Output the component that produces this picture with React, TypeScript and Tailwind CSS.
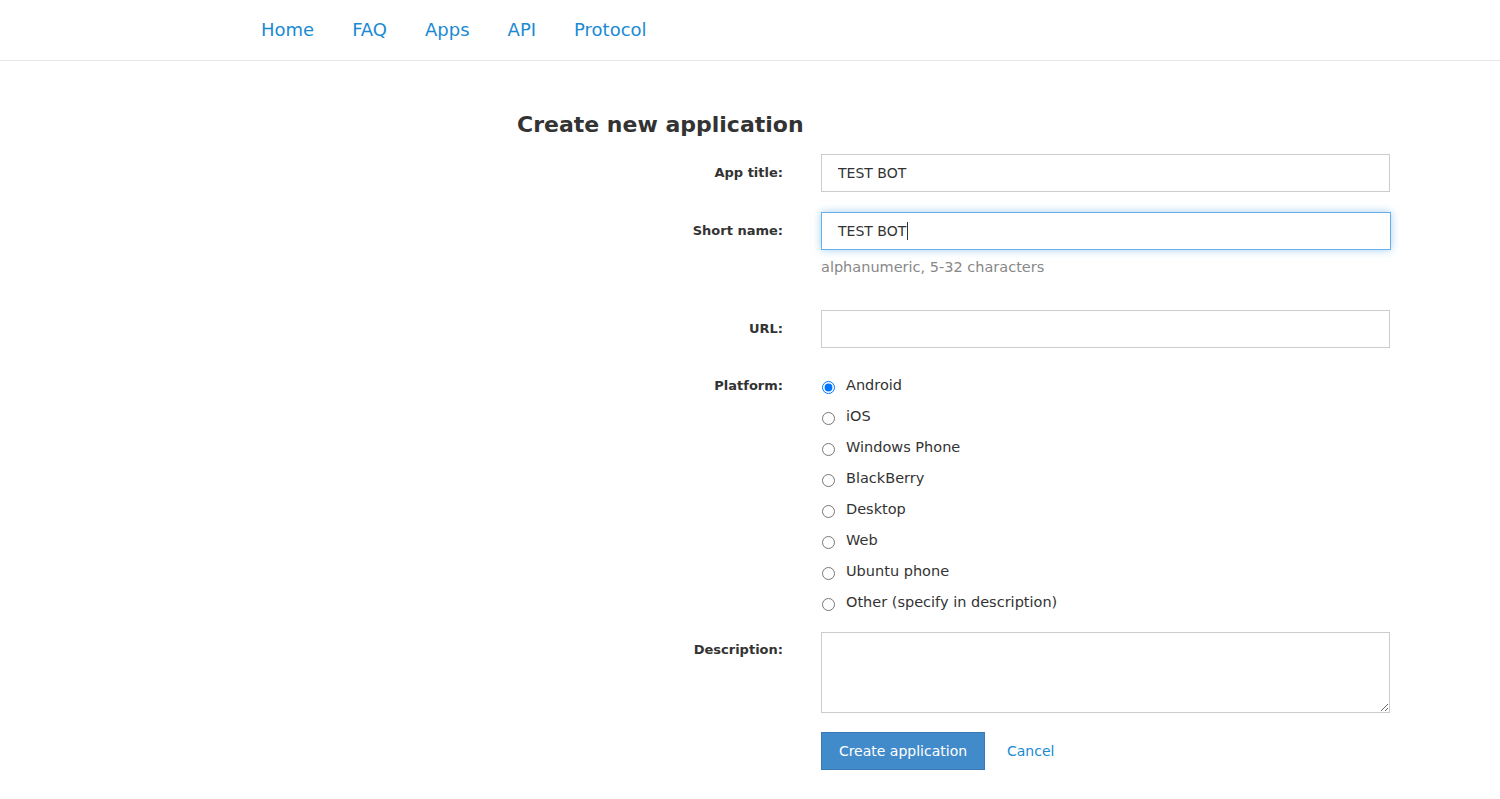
import React from 'react';

const navLinks = ['Home', 'FAQ', 'Apps', 'API', 'Protocol'];

const platforms = [
  'Android',
  'iOS',
  'Windows Phone',
  'BlackBerry',
  'Desktop',
  'Web',
  'Ubuntu phone',
  'Other (specify in description)',
];

function Label({ children, className = '' }: { children: React.ReactNode; className?: string }) {
  return (
    <div className={`w-[266px] shrink-0 text-right text-[13px] font-bold text-[#333] ${className}`}>
      {children}:
    </div>
  );
}

export default function App() {
  return (
    <div className="min-h-[799px] bg-white text-[#333]" style={{ fontFamily: '"DejaVu Sans", Verdana, sans-serif' }}>
      <header className="h-[61px] border-b border-[#e7e7e7]">
        <nav className="flex h-[60px] items-center gap-[38px] pl-[261px] text-[18px] text-[#1a8ad2]">
          {navLinks.map((link) => (
            <a key={link} href="#" className="leading-[24px] hover:underline">
              {link}
            </a>
          ))}
        </nav>
      </header>

      <main className="ml-[517px] w-[873px]">
        <h1 className="mt-[49px] text-[22px] font-bold leading-[30px] text-[#333]">Create new application</h1>

        <div className="mt-[14px] flex gap-[38px]">
          <Label className="leading-[38px]">App title</Label>
          <input
            defaultValue="TEST BOT"
            className="h-[38px] w-[570px] border border-[#ccc] px-[16px] text-[14px] text-[#333] outline-none"
          />
        </div>

        <div className="mt-[20px] flex gap-[38px]">
          <Label className="leading-[38px]">Short name</Label>
          <div>
            <div className="flex h-[38px] w-[570px] items-center border border-[#66afe9] px-[16px] text-[14px] text-[#333] shadow-[0_0_8px_rgba(102,175,233,0.6)]">
              TEST BOT<span className="ml-[1px] inline-block h-[18px] w-[1px] bg-[#333]" />
            </div>
            <p className="mt-[8px] text-[14.5px] leading-[18px] text-[#888]">alphanumeric, 5-32 characters</p>
          </div>
        </div>

        <div className="mt-[34px] flex gap-[38px]">
          <Label className="leading-[38px]">URL</Label>
          <input className="h-[38px] w-[570px] border border-[#ccc] px-[16px] text-[14px] outline-none" />
        </div>

        <div className="mt-[22px] flex gap-[38px]">
          <Label className="leading-[31px]">Platform</Label>
          <div className="flex flex-col">
            {platforms.map((p, i) => (
              <label key={p} className="flex h-[31px] items-center gap-[11px] text-[14.5px] text-[#333]">
                <input
                  type="radio"
                  name="platform"
                  defaultChecked={i === 0}
                  className="ml-[1px] mt-[4px] h-[13px] w-[13px]"
                />
                <span>{p}</span>
              </label>
            ))}
          </div>
        </div>

        <div className="mt-[14px] flex gap-[38px]">
          <Label className="pt-[8px] leading-[20px]">Description</Label>
          <textarea className="h-[81px] w-[570px] border border-[#ccc] px-[16px] py-[8px] text-[14px] outline-none" />
        </div>

        <div className="mt-[19px] flex items-center pl-[304px]">
          <button className="h-[38px] w-[164px] border border-[#3a7bb6] bg-[#428bca] text-[14px] text-white">
            Create application
          </button>
          <a href="#" className="ml-[22px] text-[14px] text-[#1a8ad2]">
            Cancel
          </a>
        </div>
      </main>
    </div>
  );
}
